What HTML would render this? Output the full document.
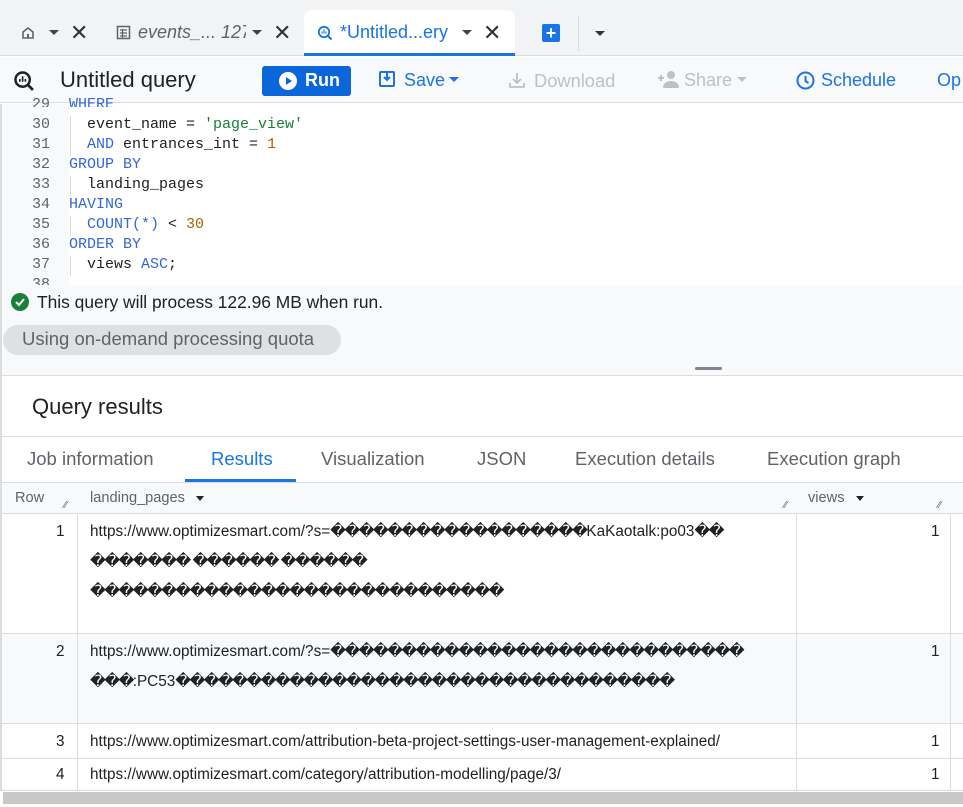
<!DOCTYPE html>
<html><head><meta charset="utf-8"><style>
*{box-sizing:border-box;margin:0;padding:0}
body{width:963px;height:807px;overflow:hidden;position:relative;background:#fff;font-family:"Liberation Sans",Arial,sans-serif;color:#202124}
.a{position:absolute;white-space:nowrap}
.mono{font-family:"Liberation Mono","DejaVu Sans Mono",monospace;font-size:15px}
.kw{color:#3367d6}.st{color:#188038}.nu{color:#b06000}
.ln{color:#5f6368;width:50px;text-align:right;left:0}
.cell{font-size:15.3px;color:#202124}
.r{letter-spacing:-1.45px}
.tab{font-size:18.5px;color:#5f6368}
</style></head><body>
<!-- tab bar -->
<div class="a" style="left:0;top:0;width:963px;height:56px;background:#f1f3f4;border-bottom:1px solid #dadce0"></div>
<svg class="a" style="left:20px;top:25px" width="16" height="16" viewBox="0 0 16 16"><path d="M3 7L8 3l5 4v6H3z" fill="none" stroke="#5f6368" stroke-width="1.6"/><rect x="7" y="9" width="2" height="4" fill="#5f6368"/></svg>
<div class="a" style="left:49px;top:30px;border:5px solid transparent;border-top:5px solid #444;border-bottom:0"></div>
<div class="a" style="left:70px;top:20px;font-size:22px;color:#333">✕</div>
<svg class="a" style="left:116px;top:25px" width="15" height="15" viewBox="0 0 15 15"><rect x="1.5" y="1.5" width="12" height="12" fill="none" stroke="#5f6368" stroke-width="1.5"/><path d="M4 5h7M4 8h7M4 11h7M6.5 4v9" stroke="#5f6368" stroke-width="1.2"/></svg>
<div class="a" style="left:138px;top:22px;font-size:18px;font-style:italic;color:#5f6368;width:108px;overflow:hidden">events_... 127</div>
<div class="a" style="left:252px;top:30px;border:5px solid transparent;border-top:5px solid #444;border-bottom:0"></div>
<div class="a" style="left:273px;top:20px;font-size:22px;color:#333">✕</div>
<div class="a" style="left:304px;top:10px;width:211px;height:46px;background:#fff;border-radius:8px 8px 0 0;border-bottom:3px solid #1a73e8"></div>
<svg class="a" style="left:317px;top:25px" width="16" height="16" viewBox="0 0 16 16"><circle cx="7" cy="7" r="5.2" fill="none" stroke="#1a73e8" stroke-width="1.8"/><path d="M11 11l3.5 3.5" stroke="#1a73e8" stroke-width="2"/><path d="M5 8.5v-2M7 8.5v-4M9 8.5v-2" stroke="#1a73e8" stroke-width="1.2"/></svg>
<div class="a" style="left:340px;top:22px;font-size:18px;color:#1a73e8">*Untitled...ery</div>
<div class="a" style="left:462px;top:30px;border:5px solid transparent;border-top:5px solid #444;border-bottom:0"></div>
<div class="a" style="left:483px;top:20px;font-size:22px;color:#333">✕</div>
<div class="a" style="left:542px;top:24px;width:18px;height:18px;background:#1a73e8;border-radius:2px;color:#fff;font-size:18px;line-height:18px;text-align:center;font-weight:bold">+</div>
<div class="a" style="left:578px;top:16px;width:1px;height:35px;background:#dadce0"></div>
<div class="a" style="left:595px;top:31px;border:5px solid transparent;border-top:5px solid #333;border-bottom:0"></div>
<!-- toolbar -->
<div class="a" style="left:0;top:57px;width:963px;height:46px;background:#f8f9fa;border-bottom:1px solid #dadce0"></div>
<svg class="a" style="left:13px;top:70px" width="22" height="22" viewBox="0 0 16 16"><circle cx="7" cy="7" r="5.2" fill="none" stroke="#202124" stroke-width="1.8"/><path d="M11 11l3.5 3.5" stroke="#202124" stroke-width="2"/><path d="M5 8.5v-2M7 8.5v-4M9 8.5v-2" stroke="#202124" stroke-width="1.2"/></svg>
<div class="a" style="left:60px;top:67px;font-size:22px">Untitled query</div>
<div class="a" style="left:262px;top:66px;width:89px;height:30px;background:#0b67d9;border-radius:3px"></div>
<svg class="a" style="left:279px;top:72px" width="18" height="18" viewBox="0 0 18 18"><circle cx="9" cy="9" r="9" fill="#fff"/><path d="M7 5l6 4-6 4z" fill="#0b67d9"/></svg>
<div class="a" style="left:305px;top:70px;font-size:18px;color:#fff;font-weight:bold">Run</div>
<svg class="a" style="left:378px;top:70px" width="18" height="18" viewBox="0 0 18 18"><rect x="1" y="1" width="16" height="16" rx="2" fill="#1a73e8"/><rect x="3" y="3" width="12" height="12" fill="#fff"/><path d="M9 3v7M6 7l3 3 3-3" stroke="#1a73e8" stroke-width="2" fill="none"/></svg>
<div class="a" style="left:404px;top:70px;font-size:18px;color:#1a73e8">Save</div>
<div class="a" style="left:449px;top:77px;border:5px solid transparent;border-top:5px solid #1a73e8;border-bottom:0"></div>
<svg class="a" style="left:508px;top:71px" width="18" height="18" viewBox="0 0 18 18"><path d="M9 2v10M5 8l4 4 4-4M2 12v4h14v-4" stroke="#bdc1c6" stroke-width="1.8" fill="none"/></svg>
<div class="a" style="left:534px;top:70px;font-size:18.3px;color:#bdc1c6">Download</div>
<svg class="a" style="left:657px;top:70px" width="22" height="18" viewBox="0 0 22 18"><path d="M1 8h6M4 5v6" stroke="#bdc1c6" stroke-width="2"/><circle cx="14" cy="5" r="4" fill="#bdc1c6"/><path d="M6 18c0-5 4-7 8-7s8 2 8 7z" fill="#bdc1c6"/></svg>
<div class="a" style="left:684px;top:70px;font-size:18px;color:#bdc1c6">Share</div>
<div class="a" style="left:737px;top:77px;border:5px solid transparent;border-top:5px solid #bdc1c6;border-bottom:0"></div>
<svg class="a" style="left:796px;top:71px" width="19" height="19" viewBox="0 0 19 19"><circle cx="9.5" cy="9.5" r="8" fill="none" stroke="#1a73e8" stroke-width="2"/><path d="M9.5 5v5l3 2" stroke="#1a73e8" stroke-width="2" fill="none"/></svg>
<div class="a" style="left:821px;top:70px;font-size:18px;color:#1a73e8">Schedule</div>
<div class="a" style="left:937px;top:70px;font-size:18px;color:#1a73e8">Op</div>
<!-- editor -->
<div class="a" style="left:0;top:104px;width:2px;height:700px;background:#dadce0"></div>
<div class="a" style="left:2px;top:104px;width:67px;height:181px;background:#f8f9fa"></div>
<div class="a mono ln" style="top:96px;height:11px;overflow:hidden">29</div>
<div class="a mono kw" style="left:69px;top:96px;height:11px;overflow:hidden">WHERE</div>
<div class="a mono ln" style="top:116px">30</div><div class="a mono" style="left:69px;top:116px">&nbsp;&nbsp;event_name = <span class="st">'page_view'</span></div>
<div class="a mono ln" style="top:136px">31</div><div class="a mono" style="left:69px;top:136px">&nbsp;&nbsp;<span class="kw">AND</span> entrances_int = <span class="nu">1</span></div>
<div class="a mono ln" style="top:156px">32</div><div class="a mono kw" style="left:69px;top:156px">GROUP BY</div>
<div class="a mono ln" style="top:176px">33</div><div class="a mono" style="left:69px;top:176px">&nbsp;&nbsp;landing_pages</div>
<div class="a mono ln" style="top:196px">34</div><div class="a mono kw" style="left:69px;top:196px">HAVING</div>
<div class="a mono ln" style="top:216px">35</div><div class="a mono" style="left:69px;top:216px">&nbsp;&nbsp;<span class="kw">COUNT(*)</span> &lt; <span class="nu">30</span></div>
<div class="a mono ln" style="top:236px">36</div><div class="a mono kw" style="left:69px;top:236px">ORDER BY</div>
<div class="a mono ln" style="top:256px">37</div><div class="a mono" style="left:69px;top:256px">&nbsp;&nbsp;views <span class="kw">ASC</span>;</div>
<div class="a" style="left:70px;top:116px;width:1px;height:40px;background:#dadce0"></div>
<div class="a" style="left:70px;top:176px;width:1px;height:20px;background:#dadce0"></div>
<div class="a" style="left:70px;top:216px;width:1px;height:20px;background:#dadce0"></div>
<div class="a" style="left:70px;top:256px;width:1px;height:20px;background:#dadce0"></div>
<div class="a" style="left:2px;top:285px;width:961px;height:90px;background:#f8f9fa"></div>
<div class="a mono ln" style="top:276px;height:9px;overflow:hidden">38</div>
<svg class="a" style="left:11px;top:293px" width="18" height="18" viewBox="0 0 18 18"><circle cx="9" cy="9" r="9" fill="#188038"/><path d="M5 9l3 3 5-6" stroke="#fff" stroke-width="2" fill="none"/></svg>
<div class="a" style="left:37px;top:292px;font-size:17.4px">This query will process 122.96 MB when run.</div>
<div class="a" style="left:3px;top:325px;width:338px;height:30px;background:#dfe0e2;border-radius:15px"></div>
<div class="a" style="left:22px;top:328px;font-size:18.5px;color:#5f6368">Using on-demand processing quota</div>
<div class="a" style="left:2px;top:375px;width:961px;height:1px;background:#dadce0"></div>
<div class="a" style="left:695px;top:367px;width:27px;height:3px;background:#80868b;border-radius:2px"></div>
<div class="a" style="left:32px;top:394px;font-size:22px">Query results</div>
<div class="a" style="left:2px;top:436px;width:961px;height:1px;background:#dadce0"></div>
<div class="a tab" style="left:27px;top:448px">Job information</div>
<div class="a tab" style="left:211px;top:448px;color:#1a73e8">Results</div>
<div class="a tab" style="left:321px;top:448px">Visualization</div>
<div class="a tab" style="left:477px;top:448px">JSON</div>
<div class="a tab" style="left:575px;top:448px">Execution details</div>
<div class="a tab" style="left:767px;top:448px">Execution graph</div>
<div class="a" style="left:185px;top:479px;width:111px;height:3px;background:#1a73e8"></div>
<!-- table -->
<div class="a" style="left:2px;top:482px;width:961px;height:32px;background:#f8f9fa;border-top:1px solid #dadce0;border-bottom:1px solid #dadce0"></div>
<div class="a" style="left:15px;top:490px;font-size:14.6px;color:#5f6368">Row</div>
<div class="a" style="left:90px;top:490px;font-size:14.6px;color:#5f6368">landing_pages</div>
<div class="a" style="left:196px;top:496px;border:4px solid transparent;border-top:5px solid #202124;border-bottom:0"></div>
<div class="a" style="left:808px;top:490px;font-size:14.6px;color:#5f6368">views</div>
<div class="a" style="left:856px;top:496px;border:4px solid transparent;border-top:5px solid #202124;border-bottom:0"></div>
<div class="a" style="left:64px;top:500px;font-size:10px;color:#5f6368">⁄⁄</div>
<div class="a" style="left:784px;top:500px;font-size:10px;color:#5f6368">⁄⁄</div>
<div class="a" style="left:938px;top:500px;font-size:10px;color:#5f6368">⁄⁄</div>
<div class="a" style="left:2px;top:633px;width:961px;height:90px;background:#f8f9fa"></div>
<div class="a" style="left:2px;top:633px;width:961px;height:1px;background:#dadce0"></div>
<div class="a" style="left:2px;top:723px;width:961px;height:1px;background:#dadce0"></div>
<div class="a" style="left:2px;top:758px;width:961px;height:1px;background:#dadce0"></div>
<div class="a" style="left:77px;top:514px;width:1px;height:276px;background:#dadce0"></div>
<div class="a" style="left:796px;top:514px;width:1px;height:276px;background:#dadce0"></div>
<div class="a" style="left:950px;top:514px;width:1px;height:276px;background:#dadce0"></div>
<div class="a cell" style="left:56px;top:523px">1</div>
<div class="a cell" style="left:90px;top:517px;line-height:30px;width:700px;overflow:hidden">https://www.optimizesmart.com/?s=<span class="r">������������������</span>KaKaotalk:po03<span class="r">��</span><br><span class="r">������� ������ ������</span><br><span class="r">�����������������������������</span></div>
<div class="a cell" style="left:931px;top:523px">1</div>
<div class="a cell" style="left:56px;top:643px">2</div>
<div class="a cell" style="left:90px;top:637px;line-height:30px;width:700px;overflow:hidden">https://www.optimizesmart.com/?s=<span class="r">�����������������������������</span><br><span class="r">���</span>:PC53<span class="r">�����������������������������������</span></div>
<div class="a cell" style="left:931px;top:643px">1</div>
<div class="a cell" style="left:56px;top:733px">3</div>
<div class="a cell" style="left:90px;top:733px">https://www.optimizesmart.com/attribution-beta-project-settings-user-management-explained/</div>
<div class="a cell" style="left:931px;top:733px">1</div>
<div class="a cell" style="left:56px;top:766px">4</div>
<div class="a cell" style="left:90px;top:766px">https://www.optimizesmart.com/category/attribution-modelling/page/3/</div>
<div class="a cell" style="left:931px;top:766px">1</div>
<div class="a" style="left:0;top:790px;width:963px;height:17px;background:#fff;border-top:1px solid #dadce0"></div>
<div class="a" style="left:3px;top:792px;width:960px;height:12px;background:#c8c8c8"></div>
</body></html>
